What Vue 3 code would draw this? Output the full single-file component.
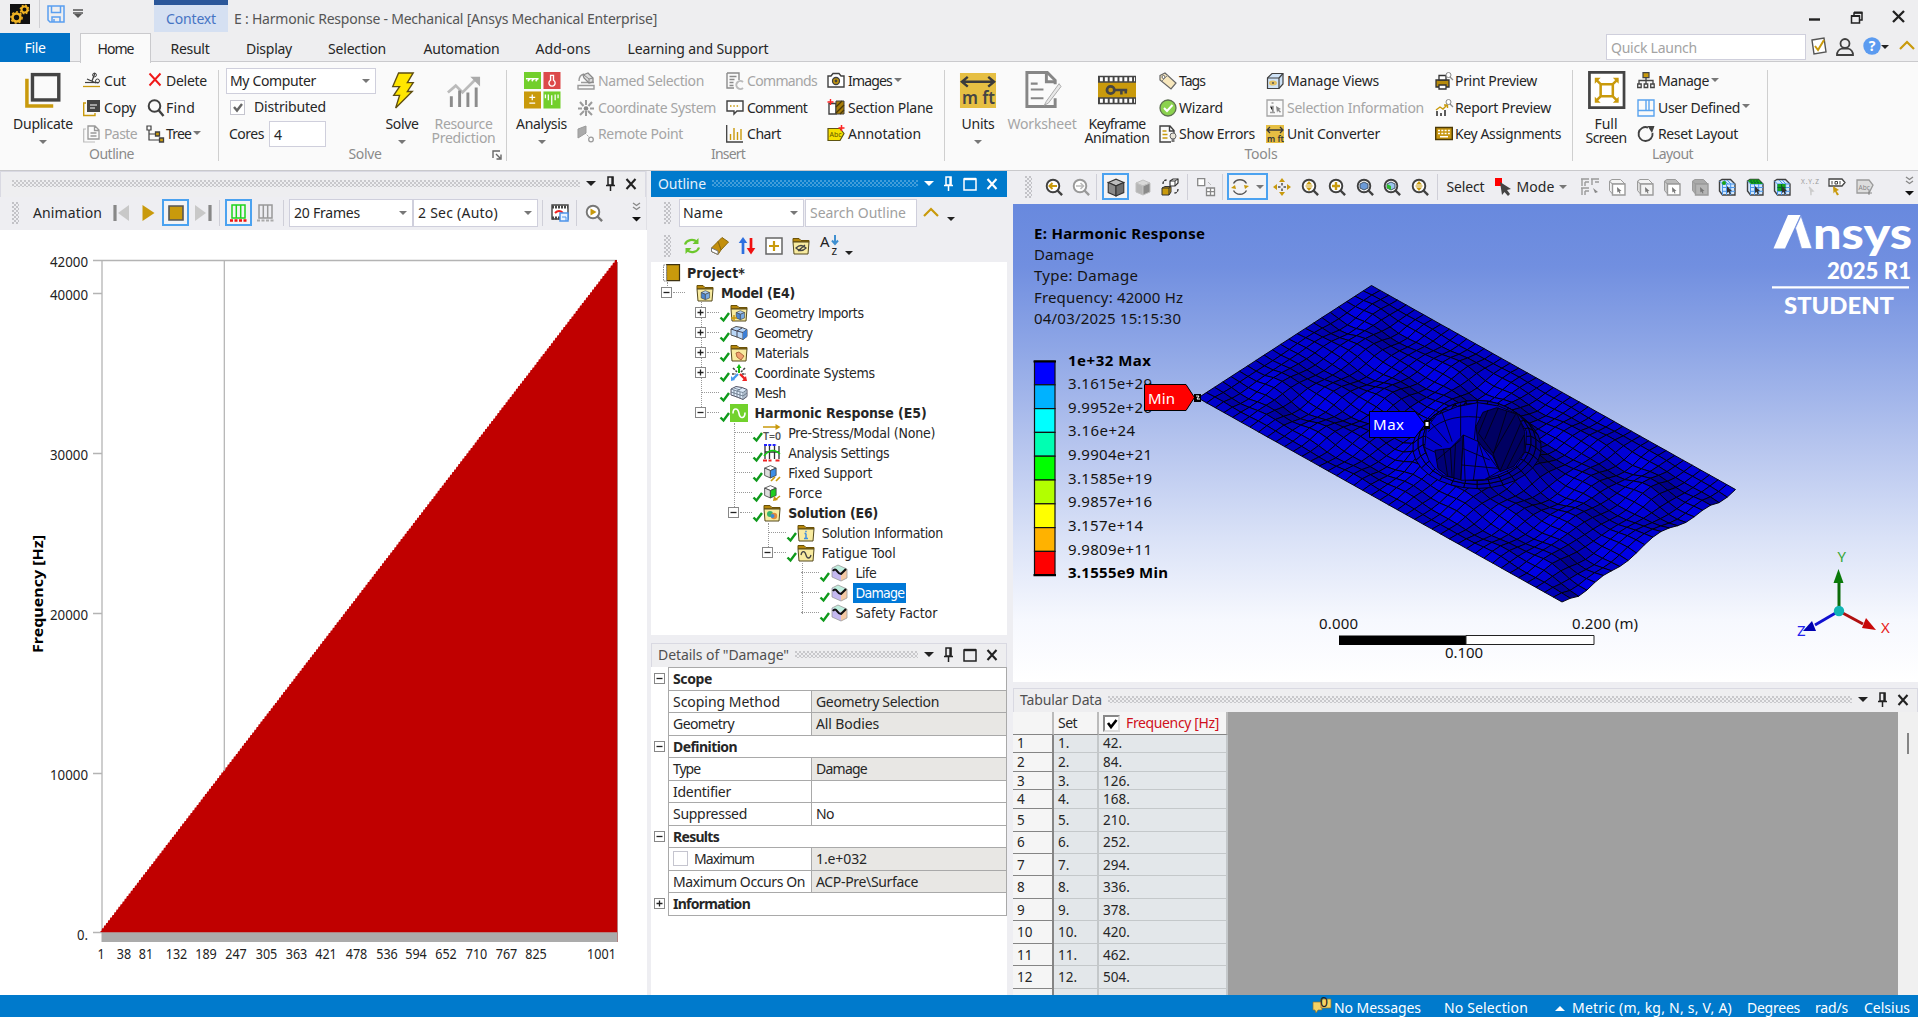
<script setup>
import { h } from 'vue'

/* Letter-spaces a label so that it occupies the given width in pixels. */
const vFit = {
  mounted(el, { value }) {
    if (!value) return
    const range = document.createRange()
    range.selectNodeContents(el)
    const natural = range.getBoundingClientRect().width
    el.style.letterSpacing = ((value - natural) / el.textContent.length).toFixed(3) + 'px'
  }
}

const D = '#404040'
const G = '#c99a0c'
const L = '#9b9b9b'
const mag = (inner, c = D) => `<circle cx="8" cy="8" r="6.3" fill="#fff" stroke="${c}" stroke-width="1.9"/><path d="M12.5 12.5l4.6 4.6" stroke="${c}" stroke-width="2.4"/>${inner}`
const folder = inner => `<path d="M1 5V1.500h6l2 2h8V5z" fill="#b5860a" stroke="#6b5208"/><path d="M1 5h16l-1 12H2z" fill="#f8eba0" stroke="#54491c"/>${inner}`
const cube = (a, b, c, s = D) => `<path d="M2 5l7-3 7 3-7 3z" fill="${a}" stroke="${s}"/><path d="M2 5l7 3v9l-7-3z" fill="${b}" stroke="${s}"/><path d="M16 5l-7 3v9l7-3z" fill="${c}" stroke="${s}"/>`
const selCube = (top, side, front) => `<path d="M1.500 3V12.500L4.500 16V6z" fill="${side}" stroke="${L}"/><path d="M1.500 3L4 1.500h8.500L17 6H4.500z" fill="${top}" stroke="${L}"/><path d="M4.500 6H17v11H4.500z" fill="${front}" stroke="${L}" stroke-width="1.400"/><path d="M9 9l4.500 4-1.800.2.8 2-1 .3-.9-2-1.200 1z" fill="#777"/>`
const meshCube = extra => `<path d="M1.500 3L4 1.500h8.500L17 6v11H4.500L1.500 13z" fill="#d3e8fd" stroke="${D}" stroke-width="1.400"/><path d="M4.500 17V6H17M1.500 3l3 3M8.500 6v11M12.700 6v11M4.500 9.500H17M4.500 13.300H17M6 2l4 4M9 2l4 4" stroke="#4b96ea" fill="none"/>${extra}<path d="M9 8l5 5-2 .2.9 2.500-1.400.5-1-2.500-1.500 1.300z" fill="#333"/>`
const resultCube = `<path d="M2 4l6-3 9 4-6 3z" fill="#bfeede"/><path d="M2 4l9 4v9l-9-4z" fill="#c4b8f0"/><path d="M17 5l-6 3v9l6-3z" fill="#f5c9a4"/><path d="M2 4l6-3 9 4v9l-6 3-9-4z" fill="none" stroke="#999" stroke-width=".8"/><path d="M3 7q2-3 4 0t4 3l5-5" stroke="#111" stroke-width="2.200" fill="none"/>`

const icons = {
  app: `<rect width="20" height="20" fill="#111"/><circle cx="6.500" cy="13.500" r="4" fill="none" stroke="#f0b323" stroke-width="2.600"/><circle cx="6.500" cy="13.500" r="5.600" fill="none" stroke="#f0b323" stroke-width="1.500" stroke-dasharray="2 2.200"/><circle cx="14.500" cy="5.500" r="3" fill="none" stroke="#f0b323" stroke-width="2"/><circle cx="14.500" cy="5.500" r="4.300" fill="none" stroke="#f0b323" stroke-width="1.300" stroke-dasharray="1.700 1.700"/>`,
  save: `<path d="M1 1h16v16H3l-2-2zM4.500 1v6.500h9V1M5 17v-5h8v5M7 14v3" fill="none" stroke="#5a9ff0" stroke-width="1.500"/>`,
  qat: `<path d="M0 1h10M0 4h10" stroke="#555" stroke-width="1.400"/><path d="M1 5h8L5 9z" fill="#555"/>`,
  cut: `<path d="M2 10.500h14" stroke="${D}" stroke-width="1.200"/><path d="M0 14.500h17" stroke="${G}" stroke-width="1.300"/><path d="M4 7l9 4M12 1L9 9" stroke="${D}" stroke-width="1.300"/><circle cx="11.500" cy="3" r="1.900" fill="none" stroke="${D}"/><circle cx="14.500" cy="9" r="2" fill="none" stroke="${D}"/>`,
  copy: `<path d="M3 4H.7v12.500H12V14" fill="none" stroke="${G}" stroke-width="1.400"/><path d="M4 1h13v12H4z" fill="#444"/><path d="M7 6h7M7 9h5" stroke="#fff" stroke-width="1.200"/>`,
  paste: `<path d="M3 4H.7v13H12" fill="none" stroke="#bbb" stroke-width="1.200"/><path d="M5 1h7l4 4v9H5zM11.500 1v4.500H16M7.500 8h6M7.500 11h6" fill="none" stroke="#999" stroke-width="1.300"/>`,
  del: `<path d="M1.500 1.500l11 12M12.500 1.500L1.500 13.500" stroke="#f01818" stroke-width="1.900"/>`,
  find: `<circle cx="6.500" cy="7" r="5.800" fill="none" stroke="${D}" stroke-width="2"/><path d="M10.500 11l5 6" stroke="${D}" stroke-width="2.400"/>`,
  tree: `<path d="M-1 1h4v4h-4zM1 5v10h10M1 9h7" fill="none" stroke="${D}" stroke-width="1.200"/><path d="M7.500 7h4v4h-4zM11.500 13h4v4h-4z" fill="${G}" stroke="${D}" stroke-width="1.300"/>`,
  dup: `<path d="M3 8v28h27" fill="none" stroke="${G}" stroke-width="3.600"/><rect x="8.700" y="3.700" width="27" height="26" fill="#fafafa" stroke="#444" stroke-width="3.500"/>`,
  solve: `<path d="M16 2h15l-6 10h6l-6 9h5L13 38l4-13h-6l6-9h-7z" fill="#ffe600" stroke="#5e4d10" stroke-width="1.400"/>`,
  resource: `<path d="M3 22l8-7 7 7 14-14" fill="none" stroke="#bbb" stroke-width="2.800"/><path d="M26 6h10v10z" fill="#aaa"/><path d="M6.500 37V26M15 37V20M23.500 37V22M32 37V17" stroke="#8c8c8c" stroke-width="3"/>`,
  analysis: `<path d="M1 1h17.500v17.500H1z" fill="#72cf2c"/><path d="M21 1h17.500v17.500H21z" fill="#dc4a4a"/><path d="M1 21h17.500v17.500H1z" fill="${G}"/><path d="M21 21h17.500v17.500H21z" fill="#72cf2c"/><path d="M3 8h13M5 10.500L7 8M9 10.500L11 8M13 10.500L15 8" stroke="#fff" stroke-width="1.400"/><path d="M28.300 4.500h3v5a3.200 3.200 0 1 1-3 0z" fill="none" stroke="#fff" stroke-width="1.400"/><path d="M9.500 24v6M6.500 27h6M6.500 33h6" stroke="#fff" stroke-width="1.300"/><path d="M29.500 25v10M26 24v6M33 24v6M23 24v4M36 24v4" stroke="#fff" stroke-width="1.300"/>`,
  named: `<path d="M1 13.500h16V17H1zM4 10.500h13M2 9q0-6 5-7" fill="none" stroke="${L}" stroke-width="1.400"/><path d="M6 3l5-2 5 5v4l-4 1-5-5z" fill="#ddd" stroke="#888" stroke-width="1.300"/><path d="M7 3l5 4 4-1M12 7v4" stroke="#888" fill="none"/>`,
  coord: `<path d="M9 1v5M9 12v5M1 9.500h4M13 9.500h4M3 3l3.500 4M15 3l-3.500 4M3 16l4-4M15 16l-4-4" stroke="${L}" stroke-width="2"/><circle cx="9" cy="9.500" r="2.300" fill="#888"/>`,
  remote: `<path d="M1 4l8-3v7l-8 5z" fill="#aaa" stroke="${L}"/><path d="M8 8l5 5" stroke="${L}" stroke-dasharray="1.500 1"/><circle cx="14" cy="14.500" r="2.300" fill="none" stroke="${L}" stroke-width="1.300"/>`,
  commands: `<path d="M1 1h12v7M1 1v15h7M3.500 4.500h7M3.500 7.500h5M3.500 10.500h4M3.500 13.500h4" fill="none" stroke="#8b8b8b" stroke-width="1.400"/><path d="M17 10a4 4 0 1 0 0 6" fill="none" stroke="#bbb" stroke-width="2"/>`,
  comment: `<path d="M1 2h16v10h-6l-3 3v-3H1z" fill="#fff" stroke="${D}" stroke-width="1.400"/><path d="M4 7h10" stroke="${G}" stroke-width="1.300" stroke-dasharray="1.500 1.800"/>`,
  chart: `<path d="M.7 0v17H17" fill="none" stroke="${D}" stroke-width="1.300"/><path d="M4.500 15V9M8 15V3M11.500 15V7M15 15V4" stroke="${G}" stroke-width="1.400"/>`,
  images: `<path d="M1 4h3l2-2.500h6L14 4h3v11H1z" fill="#fff" stroke="${D}" stroke-width="1.400"/><circle cx="9" cy="9" r="3.500" fill="${G}" stroke="${D}" stroke-width="1.300"/><circle cx="9" cy="9" r="1.400" fill="#444"/>`,
  section: `<path d="M2 4.500h7V15H2z" fill="#fff" stroke="${D}" stroke-width="1.400"/><path d="M9 2h8v13H9z" fill="#a77d0a" stroke="${D}"/><path d="M9 8l6-6M9 14l8-8M13 15l4-4" stroke="#4b3906" stroke-width="1.300"/><path d="M3.500 0v6M.5 3h6" stroke="#f22" stroke-width="1.400"/>`,
  annot: `<path d="M1 3.500h12l4 5-4 7H1z" fill="#f4df00" stroke="#5e5410" stroke-width="1.200"/><text x="2.500" y="12" font-size="7" font-family="Noto Sans" fill="#635600">Abc</text><path d="M14.500 0v6M11.500 3h6" stroke="#f22" stroke-width="1.500"/>`,
  units: `<path d="M1 2h37v36H1z" fill="#e6bf43"/><path d="M3 11h33M9 6l-6 5 6 5M30 6l6 5-6 5" fill="none" stroke="#3b3b3b" stroke-width="2.500"/><text x="3" y="33.500" font-size="18" font-weight="600" font-family="Noto Sans" textLength="34" lengthAdjust="spacingAndGlyphs" fill="#444">m ft</text>`,
  worksheet: `<path d="M33 28v8.500H4v-35h21l8 8v4" fill="none" stroke="#868686" stroke-width="3"/><path d="M24 1v10h10" fill="none" stroke="#868686" stroke-width="3"/><path d="M8 13h7M8 19h13M8 28h13" stroke="#868686" stroke-width="2.200"/><path d="M37 13L24 31l-2 4 4-2 13-17z" fill="#e8e8e8" stroke="#aaa"/>`,
  keyframe: `<path d="M0 5h39v29H0z" fill="#444"/><path d="M0 12h39v15H0z" fill="${G}"/><path d="M2 8.500h36M2 30.500h36" stroke="#fff" stroke-width="4" stroke-dasharray="3 2"/><circle cx="13" cy="19.500" r="3.800" fill="none" stroke="#444" stroke-width="2.800"/><path d="M17 19.500h13M24 19v5M28.500 19v4" stroke="#444" stroke-width="2.600"/>`,
  tags: `<path d="M1 3.500L6 1l11 10-5 6L1 8z" fill="#f7e7bd" stroke="#666" stroke-width="1.200"/><circle cx="4.500" cy="5" r="1.500" fill="#fff" stroke="#666"/><path d="M3 9l6-6" stroke="#888"/>`,
  wizard: `<circle cx="9" cy="9" r="8" fill="#8bd24e" stroke="#5d6f50" stroke-width="1.300"/><path d="M5 9l3 3 5.500-6" fill="none" stroke="#fff" stroke-width="2"/>`,
  errors: `<path d="M15 8V5.500L11 1H1v16h11M10.500 1v5H15" fill="none" stroke="${D}" stroke-width="1.400"/><path d="M3.500 6h4M3.500 9.500h5M3.500 13h5" stroke="${G}" stroke-width="1.400"/><circle cx="14" cy="11" r="3" fill="#e8e4d8" stroke="#666"/><path d="M12.500 14h3v3h-3z" fill="#777"/>`,
  views: `<path d="M1.500 6L6 1.500h11V12l-4 4.500H1.500z" fill="#cfe3f7" stroke="${D}" stroke-width="1.200"/><path d="M1.500 6H13v10.500M13 6l4-4.500" fill="none" stroke="${D}" stroke-width="1.200"/><ellipse cx="7" cy="11" rx="4" ry="2.500" fill="#e3c164"/><circle cx="7" cy="11" r="1" fill="#555"/>`,
  selinfo: `<path d="M1 1h16v16H1z" fill="none" stroke="#a5a5a5" stroke-width="1.300"/><path d="M4 7.500h3V13M4 13.500h5M5.500 4h2" stroke="${L}" stroke-width="1.600"/><path d="M10 7l5 3-2 .7 2 2-1 1-2-2-1 2z" fill="#888"/>`,
  unitconv: `<path d="M0 0h18v18H0z" fill="#e6bf43"/><path d="M1 5h16M4 2L1 5l3 3M14 2l3 3-3 3" fill="none" stroke="#3b3b3b" stroke-width="1.300"/><text x="1" y="16.500" font-size="9.500" font-weight="600" font-family="Noto Sans" textLength="17" lengthAdjust="spacingAndGlyphs" fill="#333">m ft</text>`,
  print: `<path d="M1 8h13v7H1z" fill="#b78b0c" stroke="#333" stroke-width="1.300"/><path d="M4 3.500h7V8H4zM4 13h7v4H4z" fill="#fff" stroke="#333" stroke-width="1.300"/><circle cx="13.500" cy="3" r="2.500" fill="#fff" stroke="#888"/><path d="M15 5l3 3" stroke="#888" stroke-width="1.300"/>`,
  report: `<path d="M2 17v-5M6 17v-3M10 17v-6" stroke="${D}" stroke-width="1.700"/><path d="M1 11l4-3 3 2 4-4M9 6h3.500v3" fill="none" stroke="${G}" stroke-width="1.400"/><circle cx="13.500" cy="3" r="2.500" fill="#fff" stroke="#888"/><path d="M15 5l3 3" stroke="#888" stroke-width="1.300"/>`,
  keys: `<path d="M.7 2.500h16.600v12H.7z" fill="#c7960f" stroke="#4c3a07" stroke-width="1.400"/><path d="M3 5.500h12M3 8.500h12" stroke="#fff" stroke-width="1.500" stroke-dasharray="2 1.300"/><path d="M5 11.700h8" stroke="#fff" stroke-width="1.500"/>`,
  full: `<path d="M2.500 1.500h35.500v36H2.500z" fill="#fff" stroke="#444" stroke-width="2.800"/><path d="M14 13.500h12.500V26H14zM14 13.500l-5-5M26.500 13.500l5-5M14 26l-5 5M26.500 26l5 5" fill="none" stroke="${G}" stroke-width="2.600"/><path d="M8 7h6l-6 6zM32.500 7v6l-6-6zM8 32.500v-6l6 6zM32.500 32.500h-6l6-6z" fill="${G}"/>`,
  manage: `<path d="M6 .7h6v5H6z" fill="${G}" stroke="#444" stroke-width="1.200"/><path d="M9 6v6M2 12V8.500h14V12M.7 12h3.500v3.500H.7zM7.200 12h3.500v3.500H7.200zM13.700 12h3.500v3.500h-3.500z" fill="none" stroke="#444" stroke-width="1.300"/>`,
  user: `<path d="M1 1h16v16H1zM1 11.500h16M9 1v10.500M12 1v10.500" fill="none" stroke="#5aa3ee" stroke-width="1.400"/>`,
  reset: `<path d="M11 2.500A7 7 0 1 0 15.500 8" fill="none" stroke="${D}" stroke-width="1.900"/><path d="M10.500 1h7L15 8z" fill="${D}"/>`,
  launcher: `<path d="M1 8V1h7M4 4l4 4M9 4.500V9H4.500" fill="none" stroke="#666" stroke-width="1.400"/>`,
  todo: `<path d="M2 3l12-2 2 14-12 2z" fill="#fff" stroke="#555" stroke-width="1.400"/><path d="M5 9l3 4 6-10" fill="none" stroke="${G}" stroke-width="2"/>`,
  person: `<circle cx="9" cy="5.500" r="4.500" fill="none" stroke="${D}" stroke-width="1.800"/><path d="M1 17q0-5 5-6.500h6q5 1.500 5 6.500z" fill="none" stroke="${D}" stroke-width="1.800"/>`,
  help: `<circle cx="9" cy="9" r="8.700" fill="#5b9bf0"/><text x="9" y="14" text-anchor="middle" font-size="14" font-weight="700" font-family="Noto Sans" fill="#fff">?</text>`,
  min: `<path d="M1 9.500h11" stroke="#222" stroke-width="2.400"/>`,
  restore: `<path d="M1.500 6h8v7h-8zM4 6V3h8v7H9.500" fill="none" stroke="#222" stroke-width="1.500"/><path d="M1 6h9M4 2.500h8.500" stroke="#222" stroke-width="2"/>`,
  close: `<path d="M1 1l11 11M12 1L1 12" stroke="#222" stroke-width="2.300"/>`,
  up: `<path d="M1 11l7-7 7 7" fill="none" stroke="${G}" stroke-width="2.200"/>`,
  first: `<path d="M2 1v16" stroke="#888" stroke-width="3.200"/><path d="M16 1v16L5 9z" fill="#c8c8c8"/>`,
  play: `<path d="M1.500 1L13.500 9 1.500 17z" fill="${G}"/>`,
  stop: `<path d="M2 2h14v14H2z" fill="${G}" stroke="#555" stroke-width="1.600"/>`,
  last: `<path d="M15 1v16" stroke="#888" stroke-width="3.200"/><path d="M0 1v16l11-8z" fill="#c8c8c8"/>`,
  frames: `<path d="M2 1h13v13H2zM6.300 1v13M10.700 1v13" fill="none" stroke="#1dd41d" stroke-width="1.500"/><path d="M0 16.500h17" stroke="#e11" stroke-width="2.400" stroke-dasharray="3 1.500"/>`,
  framesg: `<path d="M2 1h13v13H2zM6.300 1v13M10.700 1v13" fill="none" stroke="#999" stroke-width="1.500"/><path d="M0 16.500h17" stroke="#aaa" stroke-width="2" stroke-dasharray="3 1.500"/>`,
  video: `<path d="M1 1h16v14H1z" fill="#fff" stroke="#444" stroke-width="1.400"/><path d="M1 3h16M1 14h8" stroke="#444" stroke-width="3" stroke-dasharray="2 1"/><path d="M4 9q4-4 8 0" fill="none" stroke="#e22" stroke-width="2"/><path d="M9 9h8v8H9z" fill="#e9f3ff" stroke="#4d94ea" stroke-width="1.500"/><path d="M11 13h4v4" stroke="#4d94ea" fill="none"/>`,
  magplay: mag(`<path d="M5.500 4.500l6 3.500-6 3.500z" fill="${G}"/>`, '#777'),
  refresh: `<path d="M2 7.500a7 6 0 0 1 12-2.500M16 10.500a7 6 0 0 1-12 2.500" fill="none" stroke="#6cc72c" stroke-width="2.200"/><path d="M15.500 1v6h-6zM2.500 17v-6h6z" fill="#6cc72c"/>`,
  eraser: `<path d="M7 4.500l4-4 6.500 4.500-7.500 8z" fill="#c38f0c" stroke="#8a690e"/><path d="M7 4.500L.5 11v3.500L7 17.500l3-4.500z" fill="#c38f0c" stroke="#8a690e"/><path d="M.5 11l6.500 3v3.500L.5 14.500z" fill="#fff" stroke="#777"/>`,
  sort: `<path d="M5 17V4" stroke="#2c6fe0" stroke-width="2.700"/><path d="M.7 6L5 0l4.300 6z" fill="#2c6fe0"/><path d="M13 1v13" stroke="#f01010" stroke-width="2.700"/><path d="M8.700 11l4.300 6.500 4.300-6.500z" fill="#f01010"/>`,
  expand: `<path d="M1 1h16v16H1z" fill="#fff" stroke="#666" stroke-width="1.500"/><path d="M9 4v10M4 9h10" stroke="${G}" stroke-width="2.200"/>`,
  hide: folder(`<path d="M4 11q5-5 10 0-5 5-10 0zM6 14l7-6" fill="none" stroke="#444" stroke-width="1.300"/>`),
  az: `<text x="0" y="11" font-size="15" font-family="Noto Sans" fill="#222">A</text><text x="11.500" y="18.500" font-size="12" font-family="Noto Sans" fill="#222">z</text><path d="M15 -1v8M12 4.500l3 3.500 3-3.500" fill="none" stroke="#3f8fd0" stroke-width="2"/>`,
  project: `<path d="M4.500.7h13v16h-13z" fill="${G}" stroke="#3f3210" stroke-width="1.200"/><path d="M1.500 1h3v16h-3z" fill="#fff" stroke="#888" stroke-dasharray="1.500 1"/>`,
  model: folder(`<g transform="translate(4 5.500) scale(.6)">${cube('#a9cbf2', '#4d86cf', '#78a9e3')}</g>`),
  geoimp: folder(`<g transform="translate(5 5.500) scale(.6)">${cube('#a9cbf2', '#4d86cf', '#78a9e3')}</g><path d="M4 11v6M1 14h6" stroke="${G}" stroke-width="1.500"/>`),
  geometry: `<path d="M1 5l5-2.500 6 1 5 2v7l-4 3-6-2.500-6-2z" fill="#b8d6f7" stroke="#555"/><path d="M1 5l6 2v6.500M7 7l5-3M7 7l6 1.500v7M13 8.500l4-3" fill="none" stroke="#445" /><path d="M13 8.500l4-3v7l-4 3z" fill="#3c7fd6"/>`,
  mesh: `<path d="M1 5l5-2.500 6 1 5 2v7l-4 3-6-2.500-6-2z" fill="#dce9f8" stroke="#556"/><path d="M1 5l6 2v6.500M7 7l5-3M7 7l6 1.500v7M13 8.500l4-3M1 8l6 2 6 2 4-3M4 6v6M10 8v6.500M15 7v7M4 4l6 2" fill="none" stroke="#567" stroke-width=".7"/>`,
  materials: folder(`<path d="M6 9l3-1 5 4-3 4-4-3z" fill="#f0a070" stroke="#b06a3c"/>`),
  csys: `<path d="M3 4l4 4M15 4l-4 4M2 10h4M12 10h4" stroke="#444" stroke-width="1.600" stroke-dasharray="2.500 1"/><path d="M9 9V3" stroke="#1b1" stroke-width="2"/><path d="M6.500 4L9 0l2.500 4z" fill="#1b1"/><path d="M10 10l5 5" stroke="#e22" stroke-width="2.400"/><path d="M17 17h-5l4-5z" fill="#e22"/><path d="M8 10l-5 5" stroke="#49e" stroke-width="2.400"/><path d="M1 17v-5l4 4z" fill="#49e"/>`,
  harmonic: `<path d="M0 0h18v18H0z" fill="#72d22c"/><path d="M3 9.500c0-6 5-6 6 0s6 5 6-1" fill="none" stroke="#fff" stroke-width="1.600"/>`,
  prestress: `<path d="M0 3h14" stroke="${G}" stroke-width="1.500"/><path d="M12.500 0l5 3-5 3z" fill="${G}"/><text x="0" y="16" font-size="10.500" font-family="Noto Sans" font-weight="600" textLength="18" lengthAdjust="spacingAndGlyphs" fill="#555">T=0</text>`,
  settings: `<path d="M2 2v13M6.500 2v13M11.500 2v13M16 2v13M2 8h14" stroke="#333" stroke-width="1.300"/><path d="M1 12Q9 2 17 10" fill="none" stroke="#1c1" stroke-width="1.500"/><path d="M1 1h13" stroke="#22f" stroke-width="2" stroke-dasharray="3 1.300"/><path d="M0 16.500h18" stroke="#e22" stroke-width="2" stroke-dasharray="4 1.500 3 4"/>`,
  fixed: `<g transform="scale(.82)">${cube('#fff', '#ddd', '#3c8ee6')}</g><path d="M8 17l4-4M13 17l4-4" stroke="${G}" stroke-width="1.700"/>`,
  force: `<g transform="scale(.82)">${cube('#fff', '#ddd', '#1fce1f')}</g><path d="M17 12l-5 4" stroke="${G}" stroke-width="1.500"/><path d="M10 17l1-5 4 4z" fill="${G}"/>`,
  solution: folder(`<circle cx="7" cy="10" r="3" fill="#36b56c"/><circle cx="11" cy="12" r="3.200" fill="#e08a3c"/><circle cx="9.500" cy="12" r="2" fill="#3a8ad6"/>`),
  solinfo: folder(`<path d="M9 9.500v5M7 14.500h4M7.500 9.500H9M9 6.800v1.400" stroke="#3f8fe0" stroke-width="1.500"/>`),
  fatigue: folder(`<path d="M4 11c1-5 4-4 5 0s4 4 5 0" fill="none" stroke="#444" stroke-width="1.300"/>`),
  result: resultCube,
  magback: mag(`<path d="M4 8h8M7.500 5L4.500 8l3 3" stroke="${G}" stroke-width="2" fill="none"/>`),
  magfwd: mag(`<path d="M4 8h8M8.500 5l3 3-3 3" stroke="#bbb" stroke-width="1.600" fill="none"/>`, '#999'),
  cubed: cube('#bdbdbd', '#8a8a8a', '#6c6c6c', '#333'),
  cubeg: cube('#d9d9d9', '#b5b5b5', '#8a8a8a', '#c0c0c0'),
  swap: `<path d="M1 10l3-1.500h6V14l-2 3H1z" fill="${G}" stroke="#333"/><path d="M1 10h7v7M8 10l2-1.500" fill="none" stroke="#333"/><path d="M9 3l3-2h5v4l-3 3H9z" fill="#fff" stroke="#333" stroke-width="1.200"/><path d="M9 3h5v5M14 3l3-2" fill="none" stroke="#333"/><path d="M2 6q0-4 4-4M17 11q0 4-4 4" fill="none" stroke="#333" stroke-width="1.300" stroke-dasharray="2.500 1"/>`,
  viewports: `<path d="M.7.700h7v7h-7z" fill="#fff" stroke="#888" stroke-width="1.300"/><path d="M9.500 10h8v7.500h-8zM13.500 10v7.500M9.500 13.700h8" fill="#fff" stroke="#888" stroke-width="1.300"/><path d="M11 4l3 3" stroke="#bbb"/>`,
  rotate: `<path d="M2.500 5.500a7.500 7.500 0 0 1 13 0M2.500 12.500a7.500 7.500 0 0 0 13 0" fill="none" stroke="#555" stroke-width="1.500"/><path d="M0 10l4-3 1 4zM18 8l-4 3-1-4z" fill="${G}"/>`,
  pan: `<path d="M9 0l3 4H6zM9 18l3-4H6zM0 9l4-3v6zM18 9l-4-3v6z" fill="${G}"/><path d="M9 5v2.500M9 10.500V13M5 9h2.500M10.500 9H13" stroke="#777" stroke-width="2"/>`,
  magud: mag(`<path d="M8 3l3 3.500H5zM8 13l3-3.500H5z" fill="${G}"/><path d="M4.500 8h7" stroke="${G}"/>`),
  magplus: mag(`<path d="M8 4v8M4 8h8" stroke="${G}" stroke-width="2.400"/>`),
  magcube: mag(`<path d="M4 6l4-2 4 2v4l-4 2-4-2z" fill="#6c9bd8" stroke="#456"/>`),
  maggreen: mag(`<path d="M4 6l4-2 4 2v4l-4 2-4-2z" fill="#9cc4ee" stroke="#456"/><path d="M4 6l4 2v4l-4-2z" fill="#2bbb2b"/>`),
  cursorred: `<path d="M0 0h7v8H0z" fill="#f00"/><path d="M5 4l11 7-4 1 3 4-2 2-3.500-4L7 17z" fill="#444"/>`,
  selmulti: `<path d="M0 1h8M1 1v7M4 4h4M4 4v4M10 1h8M11 1v6M14 4h4M0 10h8M1 10v7M4 13h4M4 13v4" stroke="${L}" stroke-width="1.400"/><path d="M12 10l5 4-3 1z" fill="#888"/>`,
  sel1: selCube('#f4f4f4', '#f4f4f4', '#fff'),
  sel2: selCube('#f4f4f4', '#ddd', '#f4f4f4'),
  sel3: selCube('#bbb', '#ccc', '#fff'),
  sel4: selCube('#aaa', '#aaa', '#b5b5b5'),
  mesh1: meshCube(`<circle cx="6" cy="5" r="2" fill="#17a317"/>`),
  mesh2: meshCube(`<path d="M2 3l2-1.500h8.500L17 6H5z" fill="#17a317"/><path d="M4 3h9M5 4.700h11" stroke="#063" stroke-dasharray="2 1"/>`),
  mesh3: meshCube(`<path d="M4.500 6h8v7h-8z" fill="#17a317"/><path d="M8.500 6v7M4.500 9.500h8" stroke="#063"/>`),
  xyz: `<text x="0" y="6" font-size="6.500" font-family="Noto Sans" textLength="18" fill="#999">X.Y.Z</text><path d="M8 9l4 4-2 .2v4" stroke="#ccc" fill="#ccc" stroke-width="1.400"/>`,
  tagsel: `<path d="M1 1h13l3 3.500L14 8H1z" fill="#fff" stroke="#444" stroke-width="1.300"/><path d="M4 3v3.500M12 3v3.500M7 3.500h2.500v2.500H7z" stroke="#444" fill="none"/><path d="M5 8l6 4-2.500 1 2.500 3.500-2 1-2-4-1.500 2z" fill="${G}"/>`,
  abc: `<path d="M1 2h12l4 5-4 8H1z" fill="#ddd" stroke="${L}" stroke-width="1.300"/><text x="2.500" y="11.500" font-size="6.500" font-family="Noto Sans" fill="#888">Abc</text><path d="M13 12v5M12 15h4" stroke="#888"/>`,
  more: `<path d="M1 0l3.500 2.500L8 0M1 4l3.500 2.500L8 4" fill="none" stroke="#888" stroke-width="1.400"/><path d="M0 14h9l-4.500 4.500z" fill="#111"/>`,
  pin: `<path d="M3 1h5v8H3zM1 9.500h9M5.500 9v6" fill="none" stroke="currentColor" stroke-width="1.500"/><path d="M7.300 1v8" stroke="currentColor" stroke-width="2"/>`,
  box: `<path d="M1 2h12v11H1z" fill="none" stroke="currentColor" stroke-width="1.500"/><path d="M1 2h12" stroke="currentColor" stroke-width="2.400"/>`,
  x: `<path d="M1.500 2l9 10M10.500 2l-9 10" stroke="currentColor" stroke-width="2.100"/>`,
  check: `<path d="M1.500 6.500L4.500 9.500 10 2" fill="none" stroke="#0f9a1c" stroke-width="2.400"/>`,
  msg: `<path d="M1 7h9v8H6l-2 3-1-3H1z" fill="#f6d263" stroke="#8a7430" stroke-width=".7"/><path d="M9 4h10v9H9z" fill="#f6d263" stroke="#8a7430" stroke-width=".7"/><text x="8" y="12" font-size="14" font-family="Noto Sans" fill="#222">0</text>`
}
const Ic = (p) => h('svg', {
  width: p.w || 18, height: p.h || p.w || 18,
  viewBox: `0 0 ${p.vw || p.w || 18} ${p.vh || p.h || p.w || 18}`,
  innerHTML: icons[p.n]
})
Ic.props = ['n', 'w', 'h', 'vw', 'vh']

const tabs = [
  ['Home', 36, 71, 'home'], ['Result', 39, 78], ['Display', 46, 80], ['Selection', 58, 96],
  ['Automation', 76, 113], ['Add-ons', 55, 90], ['Learning and Support', 141, 180]
]

const big = (gap, w, icon, lines, o = {}) => ({ t: 'big', gap, w, icon, lines, ...o })
const col = (gap, w, tg, rows) => ({ t: 'col', gap, w, tg, rows })
const r = (i, s, w, o = {}) => ({ i, s, w, ...o })
const dis = { dis: true }
const arr = { arrow: true }
const groups = [
  { w: 219, label: ['Outline', 45], items: [
    big(4, 78, 'dup', [['Duplicate', 60]], arr),
    col(1, 65, 3, [r('cut', 'Cut', 22), r('copy', 'Copy', 32), r('paste', 'Paste', 33, dis)]),
    col(0, 66, 0, [r('del', 'Delete', 41), r('find', 'Find', 29), r('tree', 'Tree', 25, arr)])] },
  { w: 288, label: ['Solve', 33], launcher: true, items: [
    { t: 'solve', gap: 7, w: 152 },
    big(0, 48, 'solve', [['Solve', 33]], arr),
    big(0, 75, 'resource', [['Resource', 58], ['Prediction', 64]], dis)] },
  { w: 438, label: ['Insert', 34], items: [
    big(0, 69, 'analysis', [['Analysis', 51]], arr),
    col(1, 149, 3, [r('named', 'Named Selection', 106, dis), r('coord', 'Coordinate System', 118, dis), r('remote', 'Remote Point', 85, dis)]),
    col(0, 101, 3, [r('commands', 'Commands', 70, dis), r('comment', 'Comment', 60), r('chart', 'Chart', 34)]),
    col(0, 110, 3, [r('images', 'Images', 44, arr), r('section', 'Section Plane', 85), r('annot', 'Annotation', 73)])] },
  { w: 628, label: ['Tools', 33], items: [
    big(10, 46, 'units', [['Units', 33]], arr),
    big(0, 82, 'worksheet', [['Worksheet', 69]], dis),
    big(0, 68, 'keyframe', [['Keyframe', 57], ['Animation', 65]]),
    col(8, 107, 2, [r('tags', 'Tags', 26), r('wizard', 'Wizard', 44), r('errors', 'Show Errors', 76)]),
    col(0, 169, 3, [r('views', 'Manage Views', 92), r('selinfo', 'Selection Information', 137, dis), r('unitconv', 'Unit Converter', 93)]),
    col(0, 135, 2, [r('print', 'Print Preview', 82), r('report', 'Report Preview', 96), r('keys', 'Key Assignments', 106)])] },
  { w: 195, label: ['Layout', 41], items: [
    big(2, 62, 'full', [['Full', 23], ['Screen', 41]]),
    col(0, 125, 3, [r('manage', 'Manage', 51, arr), r('user', 'User Defined', 82, arr), r('reset', 'Reset Layout', 80)])] }
]

/* Model tree: level, icon, label, label width, expander, options */
const tree = [
  { l: 0, i: 'project', s: 'Project*', w: 58, b: 1, root: 1 },
  { l: 0, i: 'model', s: 'Model (E4)', w: 74, b: 1, e: '-' },
  { l: 1, i: 'geoimp', s: 'Geometry Imports', w: 109, e: '+', c: 1 },
  { l: 1, i: 'geometry', s: 'Geometry', w: 58, e: '+', c: 1 },
  { l: 1, i: 'materials', s: 'Materials', w: 54, e: '+', c: 1 },
  { l: 1, i: 'csys', s: 'Coordinate Systems', w: 120, e: '+', c: 1 },
  { l: 1, i: 'mesh', s: 'Mesh', w: 31, c: 1 },
  { l: 1, i: 'harmonic', s: 'Harmonic Response (E5)', w: 172, b: 1, e: '-', c: 1 },
  { l: 2, i: 'prestress', s: 'Pre-Stress/Modal (None)', w: 147, c: 1 },
  { l: 2, i: 'settings', s: 'Analysis Settings', w: 101, c: 1 },
  { l: 2, i: 'fixed', s: 'Fixed Support', w: 84, c: 1 },
  { l: 2, i: 'force', s: 'Force', w: 34, c: 1 },
  { l: 2, i: 'solution', s: 'Solution (E6)', w: 90, b: 1, e: '-', c: 1 },
  { l: 3, i: 'solinfo', s: 'Solution Information', w: 121, c: 1 },
  { l: 3, i: 'fatigue', s: 'Fatigue Tool', w: 74, e: '-', c: 1 },
  { l: 4, i: 'result', s: 'Life', w: 21, c: 1 },
  { l: 4, i: 'result', s: 'Damage', w: 49, c: 1, sel: 1 },
  { l: 4, i: 'result', s: 'Safety Factor', w: 82, c: 1 }
]
/* dotted connectors: left, top, bottom */
const guides = [[16, 20, 26], [49.700, 40, 151], [83.300, 161, 251], [117, 261, 291], [150.500, 301, 352]]

const details = [
  { h: 'Scope', w: 39, e: '-' },
  { k: 'Scoping Method', kw: 107, v: 'Geometry Selection', vw: 123, g: 1 },
  { k: 'Geometry', kw: 61, v: 'All Bodies', vw: 63, g: 1 },
  { h: 'Definition', w: 64, e: '-' },
  { k: 'Type', kw: 27, v: 'Damage', vw: 51, g: 1 },
  { k: 'Identifier', kw: 58, v: '', vw: 0 },
  { k: 'Suppressed', kw: 74, v: 'No', vw: 18 },
  { h: 'Results', w: 46, e: '-' },
  { k: 'Maximum', kw: 60, v: '1.e+032', vw: 51, g: 1, cb: 1 },
  { k: 'Maximum Occurs On', kw: 132, v: 'ACP-Pre\\Surface', vw: 102, g: 1 },
  { h: 'Information', w: 77, e: '+' }
]

const edges = [734.500, 753, 771.700, 790.500, 809.300, 832, 854, 876.500, 899, 921.500, 944, 966.500, 989]
const table = edges.slice(1).map((b, i) => ({ n: i + 1, hgt: b - edges[i], f: 42 * (i + 1) + '.' }))

const yTicks = [['42000', 260], ['40000', 293], ['30000', 453], ['20000', 613], ['10000', 773], ['0.', 933]]
const xTicks = [[1, 101], [38, 124], [81, 146], [132, 176.500], [189, 206], [247, 236], [305, 266.500], [363, 296.500], [421, 326], [478, 356.500], [536, 387], [594, 416], [652, 446], [710, 476.500], [767, 506.500], [825, 536], [1001, 601.500]]
/* stepped upper edge of the filled frequency plot */
let plot = 'M101 932'
for (let i = 0; i <= 250; i++) {
  const x = 100 + i * 2.06
  const y = 931 - i * 2.684
  plot += `L${x.toFixed(1)} ${y.toFixed(1)}h1.500`
}
plot += 'L617 260V932Z'

const legendColors = ['#0000ff', '#00b2ff', '#00ffff', '#00ffb2', '#00ff00', '#b2ff00', '#ffff00', '#ffb200', '#ff0000']
const legendLabels = [['1e+32 Max', 83, 1], ['3.1615e+29', 84], ['9.9952e+26', 84], ['3.16e+24', 67], ['9.9904e+21', 84], ['3.1585e+19', 84], ['9.9857e+16', 84], ['3.157e+14', 75], ['9.9809e+11', 84], ['3.1555e9 Min', 100, 1]]
const info = [['E: Harmonic Response', 171, 1], ['Damage', 60], ['Type: Damage', 104], ['Frequency: 42000 Hz', 149], ['04/03/2025 15:15:30', 147]]

/* Deformed shell mesh, projected onto the viewport */
const NU = 42
const NV = 21
const CU = 22.900
const CV = 9.300
const height = (i, j) => {
  const d = Math.hypot(i - CU, j - CV)
  const edge = Math.max(0, Math.min(1, i / 3, (NV - j) / 3, j / 2.500))
  const wave = 2.300 * Math.sin(i * 0.800 + 1.300 * Math.sin(j * 0.420)) * Math.cos(j * 0.550 + 0.400) + 2 * Math.sin(i * 0.450 - j * 0.950) + 1.200 * Math.sin(i * 1.150 + j * 0.600)
  const tip = i > NU - 4 ? (i - NU + 4) / 4 * 4 * Math.sin(j / NV * Math.PI * 2.600) : 0
  return wave * edge - tip * Math.min(1, (NV - j) / 2) * Math.min(1, j / 2) + 8 * Math.exp(-Math.pow((d - 4.300) / 1.300, 2))
}
const pt = (i, j, z) => [185 + i / NU * 364 + j / NV * 173.500, 194 + i / NU * 204 - j / NV * 112.500 - z]
const toPoly = (p, b) => ({ d: p.map(q => q[0].toFixed(1) + ',' + q[1].toFixed(1)).join(' '), f: `rgb(0,0,${Math.round(Math.max(95, Math.min(230, b)))})` })
const cells = []
for (let i = 0; i < NU; i++) {
  for (let j = NV - 1; j >= 0; j--) {
    const z = [height(i, j), height(i + 1, j), height(i + 1, j + 1), height(i, j + 1)]
    const p = [pt(i, j, z[0]), pt(i + 1, j, z[1]), pt(i + 1, j + 1, z[2]), pt(i, j + 1, z[3])]
    const slope = (z[2] + z[3] - z[0] - z[1]) * 0.900 + (z[0] + z[3] - z[1] - z[2]) * -0.450
    cells.push(toPoly(p, 198 + slope * 9))
  }
}
/* Raised collar around the opening */
const collar = []
const SEG = 30
const radii = [1.260, 1.160, 1.060, 0.960, 0.820]
const lift = [4, 11, 16, 16, 8]
const ring = (k, a) => {
  const s = Math.sin(a)
  return [464 + Math.cos(a) * 51 * radii[k], 246 + s * 31 * radii[k] - lift[k] * (0.600 - 0.450 * s)]
}
for (let n = 0; n < SEG; n++) {
  for (let k = 0; k < 4; k++) {
    const a = n / SEG * Math.PI * 2 - Math.PI / 2
    const c = (n + 1) / SEG * Math.PI * 2 - Math.PI / 2
    const p = [ring(k, a), ring(k, c), ring(k + 1, c), ring(k + 1, a)]
    collar.push(toPoly(p, 182 - 40 * Math.cos(a + 0.300) + (k === 2 ? 12 : -6)))
  }
}

const selIcons = ['selmulti', 'sel1', 'sel2', 'sel3', 'sel4', 'mesh1', 'mesh2', 'mesh3', 'xyz', 'tagsel', 'abc']
const zoomIcons = ['pan', 'magud', 'magplus', 'magcube', 'maggreen', 'magud']
</script>

<template>
  <div class="app">
    <header class="top">
      <div class="titlebar">
        <Ic n="app" :w="20" class="appicon" />
        <i class="tsep" />
        <Ic n="save" class="saveicon" />
        <Ic n="qat" :w="10" class="qat" />
        <div class="context"><span v-fit="50">Context</span></div>
        <span class="title" v-fit="423">E : Harmonic Response - Mechanical [Ansys Mechanical Enterprise]</span>
        <div class="win"><Ic n="min" :w="13" /><Ic n="restore" :w="13" :h="14" /><Ic n="close" :w="13" /></div>
      </div>
      <nav class="tabs">
        <div class="file"><span v-fit="21">File</span></div>
        <div v-for="t in tabs" :key="t[0]" class="tab" :class="t[3]" :style="{ width: t[2] + 'px' }"><span v-fit="t[1]">{{ t[0] }}</span></div>
        <div class="tools">
          <div class="quick"><span v-fit="86">Quick Launch</span></div>
          <Ic n="todo" class="g1" /><Ic n="person" class="g2" /><Ic n="help" class="g3" />
          <i class="caret dk" />
          <Ic n="up" :w="16" class="g4" />
        </div>
      </nav>
    </header>

    <section class="ribbon">
      <div v-for="g in groups" :key="g.label[0]" class="group" :style="{ width: g.w + 'px' }">
        <div class="items">
          <div v-for="(it, k) in g.items" :key="k" :class="[it.t, { off: it.dis }]" :style="{ width: it.w + 'px', marginLeft: it.gap + 'px' }">
            <template v-if="it.t === 'big'">
              <Ic :n="it.icon" :w="it.icon === 'keyframe' ? 40 : 38" :h="38" :vh="39" :vw="39" />
              <div class="lines"><span v-for="l in it.lines" :key="l[0]" v-fit="l[1]">{{ l[0] }}</span></div>
              <i v-if="it.arrow" class="caret down" />
            </template>
            <template v-else-if="it.t === 'col'">
              <div v-for="row in it.rows" :key="row.s" class="row" :class="{ off: row.dis }">
                <Ic :n="row.i" /><span :style="{ marginLeft: it.tg + 'px' }" v-fit="row.w">{{ row.s }}</span><i v-if="row.arrow" class="caret" />
              </div>
            </template>
            <template v-else>
              <div class="combo mc"><span v-fit="86">My Computer</span><i class="caret" /></div>
              <div class="row dist"><b class="cb"><svg width="15" height="15"><path d="M3 6l3 3.500L11 3" fill="none" stroke="#666" stroke-width="2.400" /></svg></b><span v-fit="72">Distributed</span></div>
              <div class="row cores"><span v-fit="35">Cores</span><div class="num">4</div></div>
            </template>
          </div>
        </div>
        <div class="glabel"><span v-fit="g.label[1]">{{ g.label[0] }}</span></div>
        <Ic v-if="g.launcher" n="launcher" :w="10" class="launcher" />
      </div>
    </section>

    <main class="body">
      <!-- Animation graph -->
      <section class="panel graph">
        <div class="phead"><i class="dots" /><i class="tri" /><Ic n="pin" :w="11" :h="16" /><Ic n="x" :w="12" :h="14" /></div>
        <div class="bar anim">
          <i class="grip" /><span class="albl" v-fit="69">Animation</span>
          <Ic n="first" class="a1" /><Ic n="play" class="a2" />
          <b class="hot a3"><Ic n="stop" /></b><Ic n="last" class="a4" /><i class="sep a5" />
          <b class="hot a6"><Ic n="frames" /></b><Ic n="framesg" class="a7" /><i class="sep a8" />
          <div class="combo c1"><span v-fit="66">20 Frames</span><i class="caret" /></div>
          <div class="combo c2"><span v-fit="80">2 Sec (Auto)</span><i class="caret" /></div>
          <i class="sep a9" /><Ic n="video" class="a10" /><i class="sep a9" /><Ic n="magplay" class="a10" />
          <Ic n="more" :w="9" :h="20" class="more" />
        </div>
        <svg class="chart" width="647" height="765" viewBox="0 230 647 765">
          <path d="M93 260.500H617M93 293.500h9M93 453.500h9M93 613.500h9M93 773.500h9M93 932.500h9M102 260v673" stroke="#b4b4b4" stroke-width="1.300" fill="none" />
          <path :d="plot" fill="#c00000" />
          <path d="M224.300 261V771" stroke="#b0b0b0" stroke-width="1.200" />
          <path d="M101.500 933H617.500v9H101.500z" fill="#ababab" />
          <path d="M101.500 932.500H617.500M617.500 262V942" stroke="#b48080" stroke-width="1" />
          <text v-for="t in yTicks" :key="t[0]" x="88" :y="t[1] + 6.500" text-anchor="end" :textLength="t[0] === '0.' ? 11 : 38" lengthAdjust="spacingAndGlyphs">{{ t[0] }}</text>
          <text v-for="t in xTicks" :key="t[0]" :x="t[1]" y="959" text-anchor="middle" :textLength="String(t[0]).length * 7.200" lengthAdjust="spacingAndGlyphs">{{ t[0] }}</text>
          <text transform="translate(43 594) rotate(-90)" text-anchor="middle" class="ax" textLength="118" lengthAdjust="spacingAndGlyphs">Frequency [Hz]</text>
        </svg>
      </section>

      <!-- Outline and details -->
      <section class="mid">
        <div class="phead act"><span v-fit="48">Outline</span><i class="dots" /><i class="tri" /><Ic n="pin" :w="11" :h="16" /><Ic n="box" :w="14" :h="14" /><Ic n="x" :w="12" :h="14" /></div>
        <div class="bar find">
          <i class="grip" />
          <div class="combo f1"><span v-fit="40">Name</span><i class="caret" /></div>
          <div class="combo f2"><span v-fit="96">Search Outline</span></div>
          <Ic n="up" :w="16" class="f3" /><i class="caret dk f4" />
        </div>
        <div class="bar tbar">
          <i class="grip" /><Ic n="refresh" /><Ic n="eraser" /><Ic n="sort" /><Ic n="expand" /><Ic n="hide" /><Ic n="az" :w="20" /><i class="caret dk f5" />
        </div>
        <div class="tree">
          <i v-for="(g, k) in guides" :key="k" class="guide" :style="{ left: g[0] + 'px', top: g[1] + 'px', height: g[2] - g[1] + 'px' }" />
          <div v-for="n in tree" :key="n.s" class="node" :class="{ root: n.root, bold: n.b, sel: n.sel }" :style="{ paddingLeft: (n.root ? 11 : 10 + n.l * 33.6) + 'px' }">
            <template v-if="!n.root">
              <i class="exp" :class="{ none: !n.e }"><svg v-if="n.e" width="11" height="11"><path :d="n.e === '+' ? 'M2.500 5.500h6M5.500 2.500v6' : 'M2.500 5.500h6'" stroke="#222" stroke-width="1.300" /></svg></i>
              <i class="hd" />
              <Ic v-if="n.c" n="check" :w="12" class="chk" /><i v-else class="nochk" />
            </template>
            <Ic :n="n.i" />
            <span class="nm"><span v-fit="n.w">{{ n.s }}</span></span>
          </div>
        </div>
        <div class="phead det"><span v-fit="131">Details of "Damage"</span><i class="dots" /><i class="tri" /><Ic n="pin" :w="11" :h="16" /><Ic n="box" :w="14" :h="14" /><Ic n="x" :w="12" :h="14" /></div>
        <div class="details">
          <div v-for="(d, k) in details" :key="k" class="drow">
            <div class="gut"><i v-if="d.e" class="exp"><svg width="11" height="11"><path :d="d.e === '+' ? 'M2.500 5.500h6M5.500 2.500v6' : 'M2.500 5.500h6'" stroke="#222" stroke-width="1.300" /></svg></i></div>
            <div v-if="d.h" class="dh"><span v-fit="d.w">{{ d.h }}</span></div>
            <template v-else>
              <div class="dk1"><b v-if="d.cb" class="cb" /><span v-fit="d.kw">{{ d.k }}</span></div>
              <div class="dv" :class="{ ro: d.g }"><span v-fit="d.vw">{{ d.v }}</span></div>
            </template>
          </div>
        </div>
      </section>

      <!-- Graphics and tabular data -->
      <section class="right">
        <div class="bar gbar">
          <i class="grip" /><Ic n="magback" class="b1" /><Ic n="magfwd" class="b2" /><i class="sep b3" />
          <b class="hot b4"><Ic n="cubed" :w="20" vw="18" vh="18" /></b><Ic n="cubeg" class="b5" /><Ic n="swap" class="b6" /><i class="sep b7" />
          <Ic n="viewports" class="b8" /><i class="sep b9" />
          <b class="hot wide"><Ic n="rotate" /><i class="caret" /></b>
          <div class="zooms"><Ic v-for="(z, k) in zoomIcons" :key="k" :n="z" /></div>
          <i class="sep" />
          <span class="sl" v-fit="38">Select</span><Ic n="cursorred" class="b10" /><span class="md" v-fit="38">Mode</span><i class="caret b11" />
          <div class="sels"><Ic v-for="s in selIcons" :key="s" :n="s" /></div>
          <Ic n="more" :w="9" :h="20" class="more" />
        </div>
        <svg class="view" width="905" height="478" viewBox="0 0 905 478">
          <defs>
            <linearGradient id="sky" x1="0" y1="0" x2="0" y2="1">
              <stop offset="0" stop-color="#6889de" /><stop offset=".13" stop-color="#718fe0" /><stop offset=".3" stop-color="#8ea6e6" />
              <stop offset=".5" stop-color="#b5c4ee" /><stop offset=".7" stop-color="#dae2f7" /><stop offset=".87" stop-color="#f6f8fe" /><stop offset="1" stop-color="#fff" />
            </linearGradient>
          </defs>
          <rect width="905" height="478" fill="url(#sky)" />
          <g stroke="#00000c" stroke-width=".95" stroke-linejoin="round">
            <polygon v-for="(c, k) in cells" :key="k" :points="c.d" :fill="c.f" />
            <polygon v-for="(c, k) in collar" :key="'c' + k" :points="c.d" :fill="c.f" />
          </g>
          <g transform="translate(367 -39) scale(.3432 .3333)" stroke="#000010" stroke-width="2.600">
            <path d="M130 850l5-60 30-40 60-25 60-12 60 10 50 22 32 55-4 60-28 46-50 24-45 14h-60l-55-12-28-25-15-22z" fill="#0000ce" />
            <path d="M180 740l30 90M235 715v100M285 712l-10 110M150 775l50 60M135 815l45 30M131 848l30 14M140 800q60-60 170-40" fill="none" />
            <path d="M300 742l40-14 60 20 22 52-2 62-30 42-40 16-22-48-43-38-5-50z" fill="#000062" />
            <path d="M315 735l-28 70 43 60 65-117M345 728l-40 95M370 738l-40 130 18 48M410 775l-60 143M420 810l-50 100" fill="none" />
            <path d="M160 856l45-6 38-40-8 135-38-12-28-22z" fill="#000078" />
            <path d="M185 852l12 80M205 848l5 88M220 835l-5 105M165 885l70-60" fill="none" />
            <path d="M243 810l44 20 62 88-45 26-68 2z" fill="#0000cc" />
            <path d="M243 810l5 135M287 830l-15 116M287 830l32 106M240 850l80 35M238 900l105 10" fill="none" />
          </g>
          <g class="vt">
            <text v-for="(t, k) in info" :key="t[0]" x="21" :y="34.500 + k * 21.400" :class="{ bd: t[2] }" :textLength="t[1]">{{ t[0] }}</text>
            <rect v-for="(c, k) in legendColors" :key="c" x="21.500" :y="157 + k * 23.800" width="20.500" height="23.800" :fill="c" stroke="#111" stroke-width="1.200" />
            <path d="M20.500 157.500h22.500M20.500 371.200h22.500" stroke="#000" stroke-width="2.200" />
            <text v-for="(t, k) in legendLabels" :key="t[0]" x="55" :y="161.500 + k * 23.650" :class="{ bd: t[2] }" :textLength="t[1]">{{ t[0] }}</text>
          </g>
          <path d="M131.500 180.500h41.500l8.500 13-8.500 13h-41.500z" fill="#f00" stroke="#000" /><path d="M181 190h7v8h-7z" fill="#000" /><path d="M183 192h3l-2 3h3" stroke="#fff" fill="none" />
          <text x="135" y="199.500" class="tag" textLength="27">Min</text>
          <path d="M356.500 207.500h45.500l10 13-10 13h-45.500z" fill="#00f" stroke="#000" /><path d="M411 216h6v9h-6z" fill="#000" /><path d="M412.500 218h3v4h-3z" fill="#fff" />
          <text x="360" y="226" class="tag" textLength="31">Max</text>
          <path d="M326 431.500h127v9.500h-127z" fill="#000" /><path d="M453 431.500h128v9h-128z" fill="#fff" stroke="#222" />
          <g class="vt"><text x="306" y="424.500" textLength="39">0.000</text><text x="559" y="424.500" textLength="66">0.200 (m)</text><text x="432" y="454" textLength="38">0.100</text></g>
          <g class="axes">
            <path d="M826 407v-28" stroke="#0a6a0a" stroke-width="3" /><path d="M820.500 379l5-14 5 14z" fill="#0a7a0a" />
            <path d="M826 407l24 13" stroke="#b01010" stroke-width="3" /><path d="M853 414l10 12-14-2z" fill="#c80808" />
            <path d="M826 407l-24 14" stroke="#1010d0" stroke-width="3" /><path d="M799 417l-9 10h13z" fill="#0000b0" />
            <circle cx="826" cy="407" r="5.200" fill="#12b5b5" />
            <text x="824.500" y="358" fill="#37a837">Y</text><text x="868" y="429" fill="#e82020">X</text><text x="784" y="432" fill="#2222ee">Z</text>
          </g>
          <g fill="#fff">
            <path d="M760.500 44.500L775 11h12.500L772 44.500z" /><path d="M782.500 24l5.500-12 11 32.500h-10.500z" stroke="#7893e0" stroke-width=".7" />
            <text x="800" y="44.500" class="logo" textLength="99" lengthAdjust="spacingAndGlyphs">nsys</text>
            <text x="814" y="74.500" class="ver" textLength="84" lengthAdjust="spacingAndGlyphs">2025 R1</text>
            <path d="M759 82.300h137v2.200h-137z" />
            <text x="771" y="110" class="ver" textLength="110" lengthAdjust="spacingAndGlyphs">STUDENT</text>
          </g>
        </svg>
        <div class="phead tabh"><span v-fit="82">Tabular Data</span><i class="dots" /><i class="tri" /><Ic n="pin" :w="11" :h="16" /><Ic n="x" :w="12" :h="14" /></div>
        <div class="tabular">
          <div class="grid">
            <div class="trow th"><div class="c0" /><div class="c1x"><span v-fit="19">Set</span></div><div class="c2x"><b class="cb"><svg width="16" height="15"><path d="M4 7l3 4 5.500-7" fill="none" stroke="#000" stroke-width="2.600" /></svg></b><span v-fit="93">Frequency [Hz]</span></div></div>
            <div v-for="t in table" :key="t.n" class="trow" :style="{ height: t.hgt + 'px' }"><div class="c0">{{ t.n }}</div><div class="c1x">{{ t.n }}.</div><div class="c2x">{{ t.f }}</div></div>
            <div class="trow end"><div class="c0" /><div class="c1x" /><div class="c2x" /></div>
          </div>
          <div class="void" />
          <div class="scroll"><i /></div>
        </div>
      </section>
    </main>

    <footer class="status">
      <Ic n="msg" :w="20" class="mi" /><span class="s1" v-fit="87">No Messages</span><span class="s2" v-fit="84">No Selection</span>
      <i class="uptri" /><span class="s3" v-fit="160">Metric (m, kg, N, s, V, A)</span><span class="s4" v-fit="53">Degrees</span><span class="s5" v-fit="33">rad/s</span><span class="s6" v-fit="46">Celsius</span>
    </footer>
  </div>
</template>

<style>
html, body { margin: 0; overflow: hidden; }
</style>

<style scoped>
.app { width: 1918px; height: 1017px; display: flex; flex-direction: column; overflow: hidden; background: #eeeef2; font: 14px/18px "Noto Sans", "Open Sans", sans-serif; color: #262626; }
.app * { box-sizing: border-box; }
.app span { white-space: nowrap; }
.app svg { flex: none; display: block; overflow: visible; }
i, b { flex: none; display: block; font-style: normal; }
.top { height: 62px; flex: none; background: #eeeef0; border-bottom: 1px solid #cacacd; }
.titlebar { height: 33px; display: flex; }
.appicon { margin: 4px 0 0 10px; }
.tsep { width: 1px; height: 28px; margin-left: 9px; background: #d0d0d4; }
.saveicon { margin: 5px 0 0 7px; }
.qat { margin: 9px 0 0 8px; }
.context { width: 74px; height: 32px; margin-left: 71px; border-top: 5px solid #2b579a; background: #d5e0f2; color: #4674c4; padding: 5px 0 0 12px; }
.title { margin: 10px 0 0 6px; width: 430px; color: #555; }
.win { display: flex; margin: 10px 13px 0 auto; gap: 29px; }
.tabs { height: 29px; display: flex; }
.file { width: 70px; background: #0072c6; color: #fff; text-align: center; padding-top: 6px; margin-right: 10px; }
.tab { text-align: center; padding-top: 7px; height: 29px; }
.home { background: #fafafa; border: 1px solid #cacacd; border-bottom: 0; height: 30px; padding-top: 6px; position: relative; }
.tools { margin-left: auto; display: flex; width: 312px; }
.quick { width: 200px; height: 26px; margin-top: 1px; border: 1px solid #cfcfdc; background: #fff; color: #a3a3a3; padding: 4px 0 0 4px; }
.g1 { margin: 4px 0 0 4px; } .g2 { margin: 5px 0 0 8px; } .g3 { margin: 4px 0 0 9px; } .g4 { margin: 5px 0 0 10px; }
.caret { width: 0; height: 0; border: 4px solid transparent; border-top: 4.500px solid #777; border-bottom: 0; align-self: center; }
.dk { border-top-color: #222; }
.tools .caret { align-self: flex-start; margin-top: 12px; }

.ribbon { height: 109px; flex: none; display: flex; background: #fafafa; border-bottom: 1px solid #c9c9cc; }
.group { display: flex; flex-direction: column; position: relative; height: 108px; background: linear-gradient(#cfcfcf, #cfcfcf) right 8px / 1px 91px no-repeat; }
.items { display: flex; height: 83px; }
.big { display: flex; flex-direction: column; align-items: center; padding-top: 9px; }
.lines { display: flex; flex-direction: column; align-items: center; margin-top: 8px; line-height: 14px; height: 14px; }
.down { margin-top: 9px; }
.off { color: #a5a5a5; }
.col { padding-top: 6px; }
.row { height: 26.500px; display: flex; align-items: center; }
.row .caret { margin: -3px 0 0 2px; }
.solve { padding-top: 6px; }
.combo { display: flex; align-items: center; background: #fff; border: 1px solid #cfcfdc; padding: 0 5px 0 3px; }
.combo .caret { margin-left: auto; }
.mc { width: 150px; height: 26px; }
.dist { margin-left: 4px; height: 27px; padding-bottom: 1px; }
.cb { width: 15px; height: 15px; border: 1px solid #c5c5cf; background: #fff; margin-right: 9px; }
.cores { margin-left: 3px; }
.num { width: 57px; height: 26px; border: 1px solid #cfcfdc; background: #fff; padding: 4px; margin-left: 5px; }
.glabel { text-align: center; color: #8a8a8a; padding-left: 4px; }
.launcher { position: absolute; right: 5px; top: 88px; }

.body { display: flex; height: 824px; flex: none; }
.phead { height: 26px; display: flex; align-items: center; padding: 0 8px 2px 6px; border: 1px solid #d9d9e2; border-bottom: 0; background: #eeeef0; color: #505050; flex: none; }
.dots { flex: 1; height: 7px; margin: 0 6px; background: radial-gradient(circle at 1px 1px, #bcbcbf .6px, transparent 1px) 0 0 / 4px 4px, radial-gradient(circle at 1px 1px, #bcbcbf .6px, transparent 1px) 2px 2px / 4px 4px; }
.phead svg { color: #222; }
.tri { border: 5px solid transparent; border-top: 5px solid #222; border-bottom: 0; margin-right: 9px; }
.phead svg + svg { margin-left: 9px; }
.act { background: #007acc; color: #e4f1fb; border-color: #007acc; }
.act svg { color: #fff; }
.act .tri { border-top-color: #fff; }
.act .dots { background-image: radial-gradient(circle at 1px 1px, #5aaae0 .6px, transparent 1px), radial-gradient(circle at 1px 1px, #5aaae0 .6px, transparent 1px); }
.bar { height: 33px; display: flex; align-items: center; background: #eeeef2; flex: none; padding-bottom: 2px; }
.grip { width: 7px; height: 22px; flex: none; background: radial-gradient(circle at 1px 1px, #b4b4b8 .6px, transparent 1px) 0 0 / 4px 4px, radial-gradient(circle at 1px 1px, #b4b4b8 .6px, transparent 1px) 2px 2px / 4px 4px; }
.sep { width: 1px; height: 26px; background: #cfcfd8; }
.hot { width: 27px; height: 27px; border: 2px solid #4ba2f0; display: flex; align-items: center; justify-content: center; background: #f3f3f5; }
.more { margin-left: auto; }

.graph { width: 647px; display: flex; flex-direction: column; border-right: 1px solid #e0e0e6; }
.graph .phead { padding-left: 5px; }
.anim { padding-left: 12px; padding-right: 5px; }
.albl { width: 69px; margin-left: 14px; }
.a1 { margin-left: 11px; } .a2 { margin-left: 10px; } .a3 { margin-left: 3px; } .a4 { margin-left: 6px; } .a5 { margin-left: 6px; }
.a6 { margin-left: 5px; } .a7 { margin-left: 5px; } .a8 { margin-left: 8px; }
.c1 { width: 124px; height: 28px; margin-left: 5px; } .c2 { width: 125px; height: 28px; }
.c1, .c2 { padding-left: 4px; }
.a9 { margin-left: 4px; } .a10 { margin-left: 8px; } .a10 + .a9 { margin-left: 7px; }
.chart { background: #fff; font: 14px "Noto Sans", sans-serif; }
.chart text { fill: #222; }
.chart .ax { font: 700 15px "Noto Sans", sans-serif; fill: #000; }

.mid { width: 356px; margin-left: 4px; display: flex; flex-direction: column; }
.find, .tbar { padding-left: 13px; }
.find .grip { margin-right: 8px; }
.f1 { width: 125px; height: 28px; } .f2 { width: 112px; height: 28px; color: #a0a0a0; padding-left: 4px; margin-left: 1px; }
.f3 { margin-left: 6px; } .f4 { margin: 12px 0 0 8px; }
.tbar { height: 32px; padding-bottom: 0; }
.tbar svg { margin-left: 9.300px; }
.tbar .grip { margin-right: 3px; }
.tbar .f5 { margin: 14px 0 0 5px; }
.tree { position: relative; height: 373px; background: #fff; flex: none; font: 14px/20px "DejaVu Sans Condensed", "DejaVu Sans", sans-serif; }
.node { height: 20px; display: flex; align-items: center; position: relative; top: .5px; }
.root { padding-top: 1px; }
.exp { width: 11px; height: 11px; border: 1px solid #888; background: #fff; position: relative; }
.exp svg { margin: -1px; }
.none { border: 0; background: none; }
.none + .hd { margin-left: -5px; width: 18px; }
.hd { width: 12px; margin-left: 1px; border-top: 1px dotted #999; }
.chk { margin: 8px 0 0 0; }
.nochk { width: 12px; }
.node > svg:last-of-type { margin-left: -1px; }
.root > svg:last-of-type { margin-left: 0; }
.nm { padding: 0 2px; margin-left: 5px; height: 20px; }
.bold { font-weight: 700; }
.sel .nm { background: #0078d7; color: #fff; }
.guide { position: absolute; border-left: 1px dotted #999; width: 0; }
.det { margin-top: 8px; height: 24px; }
.details { flex: 1; background: #fff; }
.drow { display: flex; height: 22.530px; }
.gut { width: 17px; padding: 6px 0 0 3px; }
.dh, .dk1, .dv { border: 1px solid #a9a9a9; border-width: 1px 0 0 1px; padding: 2px 0 0 4px; height: 23.530px; }
.dh { flex: 1; font-weight: 700; border-right-width: 1px; border-bottom-width: 1px; }
.dk1 { width: 143px; display: flex; }
.dk1 .cb { margin: 1px 6px 0 0; }
.dv { flex: 1; border-right-width: 1px; }
.ro { background: #e8e7e4; }

.right { width: 905px; margin-left: 6px; display: flex; flex-direction: column; background: #eeeef2; }
.gbar { padding-left: 12px; padding-right: 4px; }
.b1 { margin-left: 13px; } .b2 { margin-left: 9px; } .b3 { margin-left: 6px; } .b4 { margin-left: 5px; } .b5 { margin-left: 5px; } .b6 { margin-left: 9px; }
.b7 { margin-left: 8px; } .b8 { margin-left: 9px; } .b9 { margin-left: 7px; }
.wide { width: 41px; margin-left: 4px; gap: 7px; }
.zooms { display: flex; margin: 0 8px 0 5px; gap: 9.500px; }
.sl { width: 39px; margin-left: 9px; }
.b10 { margin-left: 9px; } .md { width: 38px; margin-left: 4px; } .b11 { margin-left: 4px; }
.sels { display: flex; gap: 9.500px; margin-left: 14px; }
.view { font: 15px "Noto Sans", sans-serif; }
.vt text { fill: #141414; font-size: 15px; }
.vt .bd { font-weight: 700; fill: #000; }
.tag { fill: #fff; font-size: 15px; }
.axes text { font-size: 15px; }
.logo { font: 900 43px Lato, sans-serif; }
.ver { font: 900 23px Lato, sans-serif; }
.tabh { margin-top: 6px; height: 24px; }
.tabular { flex: 1; display: flex; background: #a0a0a0; overflow: hidden; }
.grid { width: 215px; }
.trow { display: flex; height: 22.500px; line-height: 17px; font-size: 13.500px; }
.trow > div { display: flex; align-items: center; border: 1px solid #c4c8ca; border-width: 0 2px 1px 0; padding: 1px 4px 0; background: #e3e7ea; }
.trow .c0 { width: 41px; background: #f5f5f5; border-color: #858585; }
.c1x { width: 45px; } .c2x { width: 129px; }
.trow.th > div { background: #f5f5f5; border-color: #858585; font-size: 14px; border-right-color: #bbb; padding-top: 0; }
.trow.th .c2x { color: #d01020; }
.th .cb { width: 17px; height: 17px; border: 2px solid #888; border-right-color: #ddd; border-bottom-color: #ddd; margin: 1px 6px 0 0; }
.th .cb svg { margin: -1px; }
.void { flex: 1; }
.scroll { width: 20px; background: #f0f0f0; padding: 21px 0 0 9px; }
.scroll i { width: 2px; height: 21px; background: #858585; }
.status { height: 22px; flex: none; background: #007acc; color: #fff; display: flex; align-items: center; padding: 4px 8px 0 1312px; }
.mi { margin-top: -6px; }
.s1 { margin-left: 2px; width: 87px; } .s2 { margin-left: 23px; width: 84px; }
.uptri { margin-left: 27px; border: 5px solid transparent; border-bottom: 5px solid #fff; border-top: 0; }
.s3 { margin-left: 7px; width: 160px; } .s4 { margin-left: 15px; width: 53px; } .s5 { margin-left: 15px; width: 33px; } .s6 { margin-left: 16px; }
</style>
